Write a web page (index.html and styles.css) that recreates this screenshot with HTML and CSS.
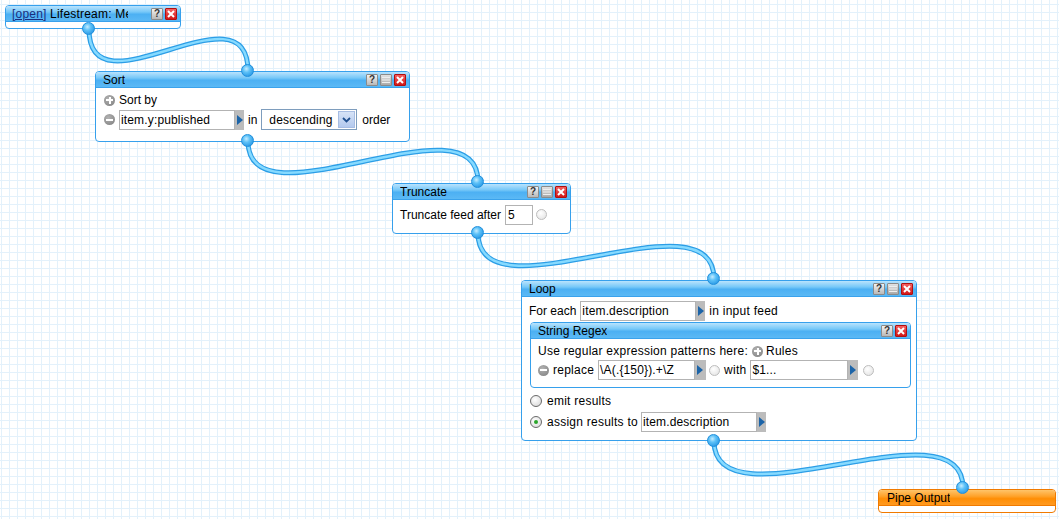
FILE: index.html
```html
<!DOCTYPE html>
<html>
<head>
<meta charset="utf-8">
<link rel="stylesheet" href="styles.css">
</head>
<body>
<div class="canvas">
  <svg class="wires" width="1059" height="519" viewBox="0 0 1059 519">
    <g fill="none" stroke-linecap="round">
      <g stroke="#2c9ee6" stroke-width="5">
        <path d="M89,29 C89,119 248,-19 248,71"/>
        <path d="M248,141 C248,231 478,92 478,182"/>
        <path d="M478,233 C478,323 714,189 714,279"/>
        <path d="M714,441 C714,531 963,398 963,488"/>
      </g>
      <g stroke="#86daff" stroke-width="2.5">
        <path d="M89,29 C89,119 248,-19 248,71"/>
        <path d="M248,141 C248,231 478,92 478,182"/>
        <path d="M478,233 C478,323 714,189 714,279"/>
        <path d="M714,441 C714,531 963,398 963,488"/>
      </g>
    </g>
  </svg>

  <div class="module m-open">
    <div class="title">
      <span class="ttext clip"><span class="open">[open]</span> Lifestream: Me</span>
      <span class="btns">
        <span class="b help">?</span>
        <span class="b close"><svg width="8" height="8" viewBox="0 0 8 8"><path d="M1 1L7 7M7 1L1 7" stroke="#fff" stroke-width="2"/></svg></span>
      </span>
    </div>
    <div class="foot"></div>
  </div>

  <div class="module m-sort">
    <div class="title">
      <span class="ttext">Sort</span>
      <span class="btns">
        <span class="b help">?</span>
        <span class="b min"><svg width="8" height="8" viewBox="0 0 8 8"><path d="M0 1.5H8M0 4H8M0 6.5H8" stroke="#eee" stroke-width="1"/></svg></span>
        <span class="b close"><svg width="8" height="8" viewBox="0 0 8 8"><path d="M1 1L7 7M7 1L1 7" stroke="#fff" stroke-width="2"/></svg></span>
      </span>
    </div>
    <div class="body sort-body">
      <div class="row r1"><span class="pm plus"></span><span>Sort by</span></div>
      <div class="row r2">
        <span class="pm minus"></span>
        <span class="field"><span class="inp w116">item.y:published</span><span class="arr"></span></span>
        <span>in</span>
        <span class="select"><span class="stext">descending</span><span class="sbtn"><svg width="9" height="6" viewBox="0 0 9 6"><path d="M1 1L4.5 4.5L8 1" stroke="#1f4f8f" stroke-width="1.8" fill="none"/></svg></span></span>
        <span class="order">order</span>
      </div>
    </div>
  </div>

  <div class="module m-trunc">
    <div class="title">
      <span class="ttext">Truncate</span>
      <span class="btns">
        <span class="b help">?</span>
        <span class="b min"><svg width="8" height="8" viewBox="0 0 8 8"><path d="M0 1.5H8M0 4H8M0 6.5H8" stroke="#eee" stroke-width="1"/></svg></span>
        <span class="b close"><svg width="8" height="8" viewBox="0 0 8 8"><path d="M1 1L7 7M7 1L1 7" stroke="#fff" stroke-width="2"/></svg></span>
      </span>
    </div>
    <div class="body trunc-body">
      <span>Truncate feed after</span>
      <span class="inp w28">5</span>
      <span class="term"></span>
    </div>
  </div>

  <div class="module m-loop">
    <div class="title">
      <span class="ttext">Loop</span>
      <span class="btns">
        <span class="b help">?</span>
        <span class="b min"><svg width="8" height="8" viewBox="0 0 8 8"><path d="M0 1.5H8M0 4H8M0 6.5H8" stroke="#eee" stroke-width="1"/></svg></span>
        <span class="b close"><svg width="8" height="8" viewBox="0 0 8 8"><path d="M1 1L7 7M7 1L1 7" stroke="#fff" stroke-width="2"/></svg></span>
      </span>
    </div>
    <div class="body loop-body">
      <div class="row each">
        <span>For each</span>
        <span class="field"><span class="inp w116">item.description</span><span class="arr"></span></span>
        <span class="wide">in input feed</span>
      </div>
      <div class="module sub">
        <div class="title">
          <span class="ttext">String Regex</span>
          <span class="btns">
            <span class="b help">?</span>
            <span class="b close"><svg width="8" height="8" viewBox="0 0 8 8"><path d="M1 1L7 7M7 1L1 7" stroke="#fff" stroke-width="2"/></svg></span>
          </span>
        </div>
        <div class="body regex-body">
          <div class="row rx1"><span class="wide">Use regular expression patterns here:</span><span class="pm plus"></span><span class="wide">Rules</span></div>
          <div class="row rx2">
            <span class="pm minus"></span>
            <span class="wide">replace</span>
            <span class="field"><span class="inp w97">\A(.{150}).+\Z</span><span class="arr a11"></span></span>
            <span class="term"></span>
            <span class="wide">with</span>
            <span class="field"><span class="inp w98">$1...</span><span class="arr a10"></span></span>
            <span class="term"></span>
          </div>
        </div>
      </div>
      <div class="row emit"><span class="radio"></span><span class="wide">emit results</span></div>
      <div class="row assign">
        <span class="radio on"></span>
        <span class="wide">assign results to</span>
        <span class="field"><span class="inp w116">item.description</span><span class="arr"></span></span>
      </div>
    </div>
  </div>

  <div class="module m-out">
    <div class="title orange">
      <span class="ttext">Pipe Output</span>
    </div>
    <div class="foot"></div>
  </div>

  <span class="port p1"></span>
  <span class="port p2"></span>
  <span class="port p3"></span>
  <span class="port p4"></span>
  <span class="port p5"></span>
  <span class="port p6"></span>
  <span class="port p7"></span>
  <span class="port p8"></span>
</div>
</body>
</html>
```

FILE: styles.css
```css
* { box-sizing: border-box; }
html, body { margin: 0; padding: 0; }
body {
  font-family: "Liberation Sans", Arial, sans-serif;
  font-size: 12px;
  color: #000;
  background: #fff;
}
.canvas {
  position: relative;
  width: 1059px;
  height: 519px;
  overflow: hidden;
  background-color: #fff;
  background-image:
    linear-gradient(to right, #e3f1fb 1px, transparent 1px),
    linear-gradient(to bottom, #e3f1fb 1px, transparent 1px);
  background-size: 8px 8px;
  background-position: 1px 4px;
}
.wires { position: absolute; left: 0; top: 0; }

.module {
  position: absolute;
  background: #fff;
  border: 1px solid #36a0ec;
  border-radius: 4px;
  display: flex;
  flex-direction: column;
}
.title {
  height: 16px;
  flex: none;
  display: flex;
  align-items: center;
  justify-content: space-between;
  padding-left: 7px;
  padding-right: 3px;
  border-radius: 3px 3px 0 0;
  background: linear-gradient(#b9e3fd 0%, #76c8f8 40%, #4cb0f3 55%, #5bb9f5 100%);
  border-bottom: 1px solid #3aa2ec;
  line-height: 14px;
  white-space: nowrap;
}
.title.orange {
  background: linear-gradient(#ffc46a 0%, #ffa22a 42%, #ff8e05 58%, #ff9a20 100%);
  border-bottom: 1px solid #f07a00;
  padding-left: 8px;
}
.ttext { overflow: hidden; }
.clip { width: 116px; letter-spacing: 0.2px; }
.open { color: #1b2f7e; text-decoration: underline; }
.btns { display: flex; gap: 2px; }
.b {
  width: 12px; height: 12px;
  display: flex; align-items: center; justify-content: center;
  border: 1px solid #8b8b8b;
  border-radius: 1px;
  background: linear-gradient(#f2f2f2, #b9b9b9);
  font-weight: bold;
  font-size: 10px;
  color: #333;
  line-height: 10px;
}
.b.min { background: linear-gradient(#e2e2e2, #a9a9a9); }
.b.close {
  border-color: #b01010;
  background: linear-gradient(#f56060, #d21818);
}
.foot { flex: 1; }

.m-open { left: 5px; top: 5px; width: 176px; height: 24px; }
.m-open .title { padding-left: 6px; }
.m-out { left: 878px; top: 489px; width: 178px; height: 24px; border-color: #f07a00; }

.body { display: flex; flex-direction: column; }
.row { display: flex; align-items: center; white-space: nowrap; }
.wide { letter-spacing: 0.25px; }

.m-sort { left: 95px; top: 71px; width: 315px; height: 71px; }
.sort-body { padding: 5px 8px 0 8px; }
.sort-body .r1 { height: 14px; gap: 4px; }
.sort-body .r2 { height: 21px; margin-top: 2px; gap: 4px; }
.sort-body .order { margin-left: 1px; }

.m-trunc { left: 392px; top: 183px; width: 179px; height: 51px; }
.trunc-body {
  flex-direction: row; align-items: center;
  padding: 3px 7px 0 7px; gap: 3px;
  height: 26px;
}
.trunc-body .inp { padding-left: 2px; margin-left: 1px; }

.m-loop { left: 521px; top: 280px; width: 396px; height: 161px; }
.loop-body { padding: 4px 5px 0 7px; }
.loop-body .each { height: 20px; gap: 4px; }
.sub {
  position: static;
  margin: 1px 0 0 1px;
  height: 66px;
}
.regex-body { padding: 5px 7px 0 7px; }
.rx1 { height: 14px; gap: 3px; }
.rx1 .pm { margin-left: 1px; }
.rx2 { height: 20px; margin-top: 2px; gap: 4px; }
.rx2 .term { margin-left: -1px; margin-right: 0; }
.rx2 .term:last-child { margin-left: 1px; }
.emit { height: 14px; margin-top: 6px; gap: 5px; padding-left: 1px; }
.assign { height: 20px; margin-top: 4px; gap: 5px; padding-left: 1px; }
.assign .field { margin-left: -2px; }

.pm {
  width: 11px; height: 11px; border-radius: 50%;
  background: radial-gradient(circle at 40% 35%, #b3b3b3, #7d7d7d);
  position: relative; flex: none;
}
.pm::before {
  content: ""; position: absolute;
  left: 2px; top: 4.5px; width: 7px; height: 2px; background: #fff;
}
.pm.plus::after {
  content: ""; position: absolute;
  left: 4.5px; top: 2px; width: 2px; height: 7px; background: #fff;
}

.field { display: flex; height: 20px; }
.inp {
  height: 20px;
  border: 1px solid #b3b3b3;
  background: #fff;
  padding-left: 1px;
  line-height: 18px;
  overflow: hidden;
  white-space: nowrap;
  letter-spacing: 0.15px;
}
.w116 { width: 116px; }
.w97 { width: 97px; }
.w98 { width: 98px; }
.w28 { width: 28px; }
.arr {
  width: 9px; height: 20px;
  background: #bcbcbc;
  position: relative;
}
.arr.a11 { width: 11px; }
.arr.a10 { width: 10px; }
.arr::after {
  content: ""; position: absolute;
  left: 2px; top: 5px;
  border-left: 6px solid #1c64a8;
  border-top: 5px solid transparent;
  border-bottom: 5px solid transparent;
}

.select {
  width: 96px; height: 21px;
  border: 1px solid #7e9dbd;
  display: flex; align-items: center; justify-content: space-between;
  padding-left: 7px; padding-right: 1px;
  letter-spacing: 0.2px;
}
.sbtn {
  width: 17px; height: 17px;
  background: linear-gradient(#d6e3f7, #b3c9ee);
  border: 1px solid #a7bde3;
  display: flex; align-items: center; justify-content: center;
}

.term {
  width: 11px; height: 11px; border-radius: 50%;
  border: 1px solid #bdbdbd;
  background: radial-gradient(circle at 40% 35%, #ffffff, #e0e0e0);
  flex: none;
}
.radio {
  width: 12px; height: 12px; border-radius: 50%;
  border: 1px solid #6a6a6a;
  background: radial-gradient(circle at 40% 35%, #ffffff, #d4d4d4);
  flex: none; position: relative;
}
.radio.on::after {
  content: ""; position: absolute;
  left: 3px; top: 3px; width: 4px; height: 4px; border-radius: 50%;
  background: #2aa52a;
}

.port {
  position: absolute;
  width: 13px; height: 13px;
  border-radius: 50%;
  border: 1px solid #1f8fdc;
  background: radial-gradient(circle at 40% 35%, #c6ecff 0%, #5ec2f8 35%, #2b9ae6 80%);
}
.p1 { left: 82px; top: 22px; }
.p2 { left: 241px; top: 64px; }
.p3 { left: 241px; top: 134px; }
.p4 { left: 471px; top: 175px; }
.p5 { left: 471px; top: 226px; }
.p6 { left: 707px; top: 272px; }
.p7 { left: 707px; top: 434px; }
.p8 { left: 956px; top: 481px; }
```
